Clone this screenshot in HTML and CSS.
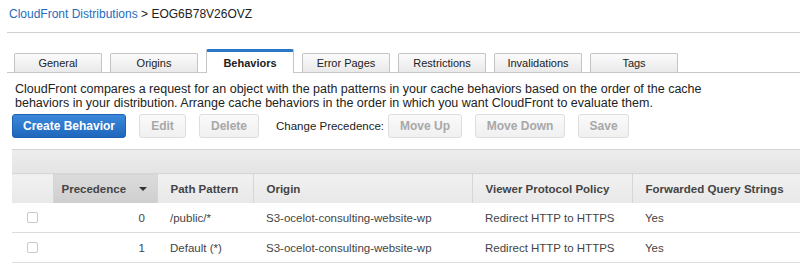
FILE: index.html
```html
<!DOCTYPE html>
<html lang="en">
<head>
  <meta charset="UTF-8" />
  <title>CloudFront Distributions</title>
  <link rel="stylesheet" href="styles.css">
</head>
<body>
  <div class="breadcrumb">
    <a href="#">CloudFront Distributions</a> &gt; EOG6B78V26OVZ
  </div>

  <ul class="tabs">
    <li>General</li>
    <li>Origins</li>
    <li class="active">Behaviors</li>
    <li>Error Pages</li>
    <li>Restrictions</li>
    <li>Invalidations</li>
    <li>Tags</li>
  </ul>

  <p class="intro">CloudFront compares a request for an object with the path patterns in your cache behaviors based on the order of the cache behaviors in your distribution. Arrange cache behaviors in the order in which you want CloudFront to evaluate them.</p>

  <div class="toolbar">
    <button class="btn primary">Create Behavior</button>
    <button class="btn w-edit" disabled>Edit</button>
    <button class="btn w-delete" disabled>Delete</button>
    <span class="label">Change Precedence:</span>
    <button class="btn w-up" disabled>Move Up</button>
    <button class="btn w-down" disabled>Move Down</button>
    <button class="btn w-save" disabled>Save</button>
  </div>

  <div class="grid">
    <div class="grid-top"></div>
    <table>
      <colgroup>
        <col class="c-check">
        <col class="c-prec">
        <col class="c-path">
        <col class="c-origin">
        <col class="c-viewer">
        <col>
      </colgroup>
      <thead>
        <tr>
          <th class="first"></th>
          <th class="sorted">Precedence <span class="caret"></span></th>
          <th>Path Pattern</th>
          <th>Origin</th>
          <th>Viewer Protocol Policy</th>
          <th>Forwarded Query Strings</th>
        </tr>
      </thead>
      <tbody>
        <tr>
          <td class="check"><span class="box"></span></td>
          <td class="num">0</td>
          <td>/public/*</td>
          <td>S3-ocelot-consulting-website-wp</td>
          <td>Redirect HTTP to HTTPS</td>
          <td>Yes</td>
        </tr>
        <tr>
          <td class="check"><span class="box"></span></td>
          <td class="num">1</td>
          <td>Default (*)</td>
          <td>S3-ocelot-consulting-website-wp</td>
          <td>Redirect HTTP to HTTPS</td>
          <td>Yes</td>
        </tr>
      </tbody>
    </table>
  </div>
</body>
</html>
```

FILE: styles.css
```css
body {
  margin: 0;
  font-family: 'Liberation Sans', Arial, sans-serif;
  font-size: 12px;
  color: #222;
  background: #fff;
  overflow: hidden;
}

.breadcrumb {
  margin-left: 7px;
  padding: 6px 0 10px 2px;
  line-height: 16px;
  border-bottom: 1px solid #cfcfcf;
}

.breadcrumb a {
  color: #1f6cbf;
  text-decoration: none;
}

/* Tabs */
.tabs {
  list-style: none;
  margin: 16px 0 0 7px;
  padding: 0 0 0 7px;
  display: flex;
  gap: 8px;
  align-items: flex-end;
  border-bottom: 1px solid #c8c8c8;
}

.tabs li {
  width: 86px;
  height: 18px;
  line-height: 19px;
  text-align: center;
  border: 1px solid #c4c4c4;
  border-bottom: none;
  border-radius: 2px 2px 0 0;
  background: linear-gradient(#fbfbfb, #e9e9e9);
  color: #222;
  font-size: 11px;
}

.tabs li.active {
  height: 21px;
  line-height: 22px;
  background: #fff;
  border-top: 3px solid #2a77c9;
  font-weight: bold;
  margin-bottom: -1px;
}

.intro {
  margin: 9px 0 0 15px;
  max-width: 735px;
  line-height: 14px;
  font-size: 12.5px;
  color: #222;
}

/* Toolbar */
.toolbar {
  display: flex;
  align-items: center;
  margin: 4px 0 0 12px;
  gap: 13px;
}

.btn {
  flex-shrink: 0;
  height: 24px;
  padding: 0;
  border: 1px solid #dedede;
  border-radius: 3px;
  background: linear-gradient(#fafafa, #f0f0f0);
  color: #a8a8a8;
  font-family: inherit;
  font-size: 12px;
  font-weight: bold;
}

.btn.primary {
  width: 114px;
  border-color: #1d62b0;
  background: linear-gradient(#3b89db, #1f66bd);
  color: #fff;
}

.w-edit { width: 47px; }
.w-delete { width: 60px; }
.w-up { width: 74px; }
.w-down { width: 90px; }
.w-save { width: 51px; }

.label {
  flex-shrink: 0;
  margin-left: 4px;
  margin-right: -9px;
  white-space: nowrap;
  font-size: 11.5px;
  color: #222;
}

/* Grid */
.grid {
  margin: 11px 0 0 12px;
}

.grid-top {
  height: 23px;
  border-top: 1px solid #d4d4d4;
  background: linear-gradient(#ededed, #e4e4e4);
}

table {
  width: 100%;
  border-collapse: collapse;
  table-layout: fixed;
  font-size: 11.5px;
}

.c-check { width: 41px; }
.c-prec { width: 104px; }
.c-path { width: 96px; }
.c-origin { width: 219px; }
.c-viewer { width: 160px; }

th {
  height: 29px;
  padding: 0 0 0 13px;
  text-align: left;
  font-weight: bold;
  color: #444;
  white-space: nowrap;
  background: linear-gradient(#f1f1f1, #e8e8e8);
  border-left: 1px solid #d6d6d6;
  border-top: 1px solid #d6d6d6;
}

th.first {
  border-left: none;
}

th.sorted {
  padding-left: 8px;
  background: linear-gradient(#dcdcdc, #cecece);
}

.caret {
  display: inline-block;
  margin-left: 10px;
  vertical-align: middle;
  border-left: 4px solid transparent;
  border-right: 4px solid transparent;
  border-top: 4px solid #333;
}

td {
  height: 29px;
  padding: 0 0 0 13px;
  color: #444;
  white-space: nowrap;
  border-bottom: 1px solid #dcdcdc;
}

td.num {
  text-align: right;
  padding-right: 12px;
}

td.check {
  padding-left: 15px;
}

.box {
  display: block;
  width: 9px;
  height: 9px;
  border: 1px solid #c9c9c9;
  border-radius: 2px;
  background: #fff;
}
```
